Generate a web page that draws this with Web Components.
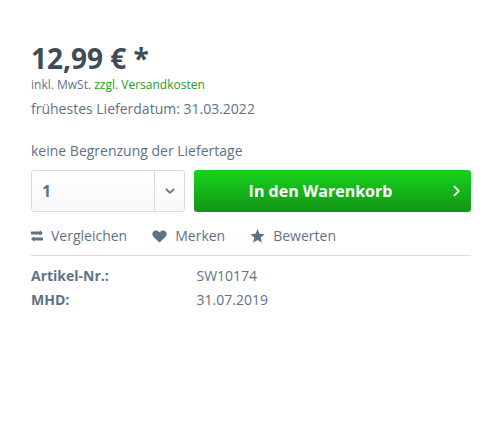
<!DOCTYPE html>
<html lang="de">
<head>
<meta charset="utf-8">
<title>Artikel</title>
<style>
  body {
    margin: 0;
    padding: 44px 20px 0 31px;
    background: #fff;
    color: #5f7285;
    font: 14px/24px "Open Sans", "Noto Sans", sans-serif;
    -webkit-font-smoothing: antialiased;
  }
</style>
</head>
<body>
<product-buybox>
  <product-price slot="price" tax="inkl. MwSt." shipping="zzgl. Versandkosten">12,99 € *</product-price>
  <span slot="date">frühestes Lieferdatum: 31.03.2022</span>
  <span slot="limit">keine Begrenzung der Liefertage</span>
  <quantity-select slot="form">1</quantity-select>
  <buy-button slot="form">In den Warenkorb</buy-button>
  <product-action slot="actions" icon="compare">Vergleichen</product-action>
  <product-action slot="actions" icon="heart">Merken</product-action>
  <product-action slot="actions" icon="star">Bewerten</product-action>
  <product-attribute slot="attributes" label="Artikel-Nr.:">SW10174</product-attribute>
  <product-attribute slot="attributes" label="MHD:">31.07.2019</product-attribute>
</product-buybox>

<script>
class ProductBuybox extends HTMLElement {
  constructor() {
    super();
    this.attachShadow({ mode: "open" }).innerHTML = `
      <style>
        :host { display: block; }
        .date { margin-top: 4px; }
        .limit { margin-top: 18px; }
        .form {
          display: grid;
          grid-template-columns: 154px 1fr;
          gap: 9px;
          margin-top: 7px;
        }
        .actions {
          display: flex;
          gap: 25px;
          padding: 12px 0 7px;
          border-bottom: 1px solid #dadae5;
        }
        .attributes { padding-top: 8px; }
      </style>
      <slot name="price"></slot>
      <div class="date"><slot name="date"></slot></div>
      <div class="limit"><slot name="limit"></slot></div>
      <div class="form"><slot name="form"></slot></div>
      <div class="actions"><slot name="actions"></slot></div>
      <div class="attributes"><slot name="attributes"></slot></div>
    `;
  }
}

class ProductPrice extends HTMLElement {
  constructor() {
    super();
    this.attachShadow({ mode: "open" }).innerHTML = `
      <style>
        :host { display: block; }
        .price {
          color: #3f4c58;
          font-size: 28px;
          font-weight: 700;
          line-height: 28px;
        }
        .tax {
          margin-top: 4px;
          font-size: 12px;
          line-height: 17px;
        }
        a { color: #259b24; text-decoration: none; }
      </style>
      <div class="price"><slot></slot></div>
      <div class="tax"><span></span> <a href="#"></a></div>
    `;
  }

  connectedCallback() {
    this.shadowRoot.querySelector("span").textContent = this.getAttribute("tax");
    this.shadowRoot.querySelector("a").textContent = this.getAttribute("shipping");
  }
}

class QuantitySelect extends HTMLElement {
  constructor() {
    super();
    this.attachShadow({ mode: "open" }).innerHTML = `
      <style>
        :host {
          display: flex;
          box-sizing: border-box;
          height: 42px;
          border: 1px solid #dadae5;
          border-radius: 3px;
          background: linear-gradient(#fff, #f8f8fa);
          font-size: 16px;
          font-weight: 700;
          line-height: 40px;
        }
        .value { flex: 1; padding-left: 10px; }
        .trigger {
          display: flex;
          align-items: center;
          justify-content: center;
          width: 29px;
          border-left: 1px solid #dadae5;
        }
      </style>
      <div class="value"><slot></slot></div>
      <div class="trigger">
        <svg width="10" height="6" viewBox="0 0 10 6" fill="none" stroke="currentColor" stroke-width="1.7">
          <path d="M.8 .8L5 4.8 9.2 .8"/>
        </svg>
      </div>
    `;
  }
}

class BuyButton extends HTMLElement {
  constructor() {
    super();
    this.attachShadow({ mode: "open" }).innerHTML = `
      <style>
        :host { display: block; }
        button {
          display: flex;
          align-items: center;
          width: 100%;
          height: 42px;
          padding: 0 11px 0 12px;
          border: 0;
          border-radius: 3px;
          background: linear-gradient(#15d51c, #159418);
          color: #fff;
          font: inherit;
          font-size: 16px;
          font-weight: 700;
          line-height: 42px;
        }
        .label { flex: 1; padding-right: 17px; text-align: center; }
        svg { margin-bottom: 1px; }
      </style>
      <button type="button">
        <span class="label"><slot></slot></span>
        <svg width="8" height="12" viewBox="0 0 8 12" fill="none" stroke="currentColor" stroke-width="1.8">
          <path d="M2 1.2L6.8 6 2 10.8"/>
        </svg>
      </button>
    `;
  }
}

const icons = {
  compare: `<svg width="12" height="12" viewBox="0 0 12 12"><path d="M0 1.5h8.8V.2L12 3 8.8 5.8V4.5H0zM12 10.5H3.2v1.3L0 9l3.2-2.8v1.3H12z"/></svg>`,
  heart: `<svg width="15" height="13" viewBox="0 0 15 13"><path d="M7.5 12.6L1.6 7C0 5.3 0 2.8 1.3 1.5 3 0 5.7.1 7.5 2.2 9.3.1 12 0 13.7 1.5 15 2.8 15 5.3 13.4 7z"/></svg>`,
  star: `<svg width="15" height="14" viewBox="0 0 15 14"><path d="M7.5 0l2 4.8 5.2.4-4 3.4 1.3 5.1-4.5-2.8L3 13.7l1.3-5.1-4-3.4 5.2-.4z"/></svg>`
};

class ProductAction extends HTMLElement {
  constructor() {
    super();
    this.attachShadow({ mode: "open" }).innerHTML = `
      <style>
        :host { display: flex; align-items: center; }
        .icon { display: flex; margin-right: 8px; }
        svg { display: block; fill: currentColor; }
      </style>
      <span class="icon"></span>
      <slot></slot>
    `;
  }

  connectedCallback() {
    this.shadowRoot.querySelector(".icon").innerHTML = icons[this.getAttribute("icon")];
  }
}

class ProductAttribute extends HTMLElement {
  constructor() {
    super();
    this.attachShadow({ mode: "open" }).innerHTML = `
      <style>
        :host { display: grid; grid-template-columns: 165.5px 1fr; }
        strong { font-weight: 700; }
      </style>
      <strong></strong>
      <span><slot></slot></span>
    `;
  }

  connectedCallback() {
    this.shadowRoot.querySelector("strong").textContent = this.getAttribute("label");
  }
}

customElements.define("product-buybox", ProductBuybox);
customElements.define("product-price", ProductPrice);
customElements.define("quantity-select", QuantitySelect);
customElements.define("buy-button", BuyButton);
customElements.define("product-action", ProductAction);
customElements.define("product-attribute", ProductAttribute);
</script>
</body>
</html>
